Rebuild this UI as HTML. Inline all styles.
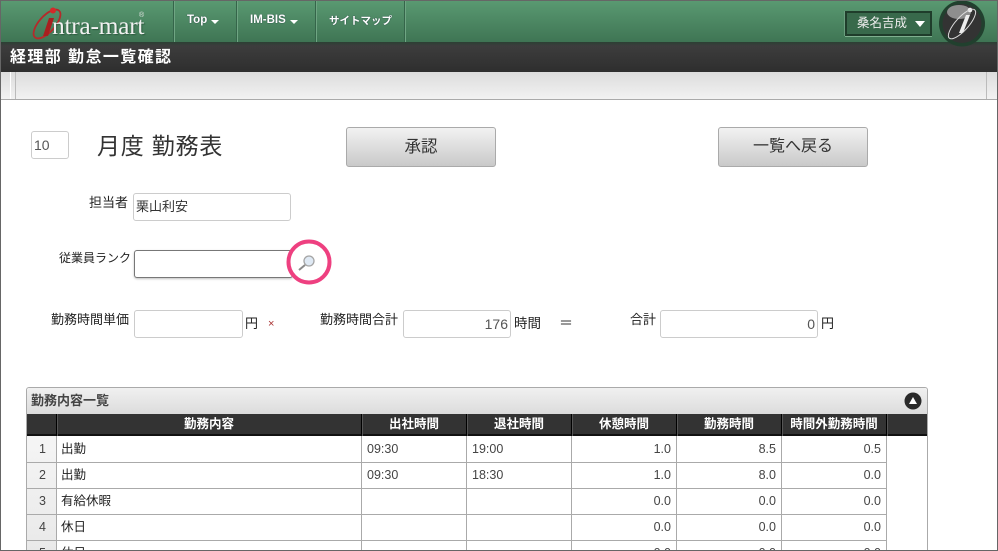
<!DOCTYPE html>
<html lang="ja"><head><meta charset="utf-8"><title>勤怠一覧確認</title>
<style>
html,body{margin:0;padding:0;background:#fff}
#w{width:998px;height:551px;position:relative;overflow:hidden;background:#fff;font-family:"Liberation Sans","Noto Sans CJK JP",sans-serif;font-size:12px;color:#333}
.a{position:absolute;white-space:nowrap}
.inp{position:absolute;box-sizing:border-box;background:#fff;border:1px solid #ccc;border-radius:3px;font-size:13px;line-height:26px;padding:0 2px;color:#555}
.btn{position:absolute;box-sizing:border-box;width:150px;height:40px;top:127px;border:1px solid #aaa;border-radius:3px;background:linear-gradient(#f2f2f2,#c9c9c9);text-align:center;font-size:16px;line-height:38px;color:#333}
.nav{position:absolute;top:1px;height:41px;width:1px;background:#6fa583;box-shadow:-1px 0 0 #35654a}
.navt{position:absolute;top:14px;color:#fff;font-weight:bold;font-size:11.500px;white-space:nowrap;text-shadow:0 0 1px #123}
.car{display:inline-block;border-left:4px solid transparent;border-right:4px solid transparent;border-top:4px solid #fff;margin-left:4px;vertical-align:-1px}
.lbl{position:absolute;white-space:nowrap;color:#222;font-size:13px;line-height:17px}
.th{position:absolute;top:414px;height:22px;line-height:21px;text-align:center;color:#fff;font-weight:bold;font-size:12.500px;white-space:nowrap}
.vl{position:absolute;width:1px;background:#aaa;top:436px;height:114px}
.hl{position:absolute;height:1px;background:#aaa;left:27px;width:859px}
.vh{position:absolute;width:1px;background:#000;top:414px;height:22px;box-shadow:1px 0 0 #555}
.c{position:absolute;white-space:nowrap;font-size:12.500px;color:#444;line-height:16px}
.r{text-align:right;width:60px}
</style></head><body><div id="w">

<!-- top bar -->
<div class="a" style="left:0;top:0;width:998px;height:42px;background:linear-gradient(#5a9a72,#3f7554)"></div>
<div class="a" style="left:0;top:42px;width:998px;height:30px;background:linear-gradient(#2c4034 0,#3d3d3d 4px,#2e2e2e 100%)"></div>
<div class="a" style="left:0;top:72px;width:998px;height:27px;background:linear-gradient(#dcdcdc,#f2f2f2)"></div>
<div class="a" style="left:0;top:99px;width:998px;height:1px;background:#aaa"></div>
<div class="a" style="left:10px;top:72px;width:1px;height:27px;background:#fff"></div>
<div class="a" style="left:15px;top:72px;width:1px;height:27px;background:#bbb"></div>
<div class="a" style="left:986px;top:72px;width:1px;height:27px;background:#bbb"></div>

<!-- logo -->
<svg class="a" style="left:30px;top:5px" width="40" height="36" viewBox="0 0 40 36">
<ellipse cx="17" cy="19" rx="8" ry="18" transform="rotate(42 17 19)" fill="none" stroke="#b52a2a" stroke-width="1.800"/>
<path d="M19 13 L24 13 L18 31 L13 31 Z" fill="#a81f1f"/>
<circle cx="23" cy="5.500" r="3" fill="#d42a2a"/>
</svg>
<div class="a" style="left:52px;top:11px;font-family:'Liberation Serif',serif;font-size:25.500px;color:#f1f1f1;letter-spacing:-.3px;line-height:30px;text-shadow:1px 1px 1px #2c5a3e">ntra-mart</div>
<div class="a" style="left:139px;top:12px;font-size:7px;color:#e5e5e5">®</div>

<div class="nav" style="left:174px"></div>
<div class="nav" style="left:237px"></div>
<div class="nav" style="left:316px"></div>
<div class="nav" style="left:405px"></div>
<div class="navt" style="left:187px">Top<span class="car"></span></div>
<div class="navt" style="left:250px">IM-BIS<span class="car"></span></div>
<div class="navt" style="left:329px;font-size:10.500px;top:13px">サイトマップ</div>

<!-- user -->
<div class="a" style="left:845px;top:11px;width:87px;height:25px;box-sizing:border-box;border:2px solid #1f3d2b;background:#38694b;box-shadow:0 1px 0 #7fb08f,-1px 0 0 #6a9e7e;color:#eee;font-size:12.500px;line-height:21px;padding-left:10px">桑名吉成</div>
<div class="a" style="left:915px;top:21px;border-left:5px solid transparent;border-right:5px solid transparent;border-top:6px solid #fff"></div>
<svg class="a" style="left:939px;top:0" width="48" height="47" viewBox="0 0 48 47">
<circle cx="23" cy="23.500" r="23" fill="#21402e"/>
<circle cx="23" cy="23.500" r="19.500" fill="#333"/>
<ellipse cx="20" cy="12" rx="12" ry="7" fill="#8e8e8e"/>
<circle cx="31" cy="10" r="2.300" fill="#eee"/>
<path d="M27 15 L31 15 L24 33 L20 33 Z" fill="#eee"/>
<ellipse cx="23" cy="24" rx="6.500" ry="19" transform="rotate(42 23 24)" fill="none" stroke="#ddd" stroke-width="1"/>
</svg>

<div class="a" style="left:10px;top:48px;color:#fff;font-size:16px;font-weight:bold;line-height:20px;letter-spacing:1.400px">経理部 勤怠一覧確認</div>

<!-- form -->
<div class="inp" style="left:31px;top:131px;width:38px;height:28px;font-size:14px">10</div>
<div class="a" style="left:97px;top:131px;font-size:23px;line-height:30px;color:#333;letter-spacing:.8px">月度 勤務表</div>
<div class="btn" style="left:346px;font-size:16.500px">承認</div>
<div class="btn" style="left:718px">一覧へ戻る</div>

<div class="lbl" style="left:89px;top:194px">担当者</div>
<div class="inp" style="left:133px;top:193px;width:158px;height:28px;color:#333">栗山利安</div>

<div class="lbl" style="left:59px;top:250px;font-size:12px">従業員ランク</div>
<div class="inp" style="left:134px;top:250px;width:159px;height:28px;border-color:#777;box-shadow:0 1px 2px rgba(0,0,0,.25)"></div>
<svg class="a" style="left:286px;top:239px" width="46" height="46" viewBox="0 0 46 46">
<circle cx="23" cy="23" r="20.500" fill="#fff" stroke="#ee4080" stroke-width="4"/>
<circle cx="23" cy="22" r="5" fill="#dfe9f4" stroke="#a5a5a5" stroke-width="1.300"/>
<path d="M19 26 L13 31" stroke="#8a8a8a" stroke-width="2"/>
</svg>

<div class="lbl" style="left:51px;top:311px">勤務時間単価</div>
<div class="inp" style="left:134px;top:310px;width:109px;height:28px"></div>
<div class="lbl" style="left:245px;top:315px">円</div>
<div class="a" style="left:268px;top:317px;font-size:11px;color:#a33;line-height:14px">×</div>
<div class="lbl" style="left:320px;top:311px">勤務時間合計</div>
<div class="inp" style="left:403px;top:310px;width:108px;height:28px;text-align:right;padding-right:2px;font-size:14px">176</div>
<div class="lbl" style="left:514px;top:315px;font-size:13.500px">時間</div>
<div class="a" style="left:559px;top:313px;font-size:14px;color:#333;line-height:20px">＝</div>
<div class="lbl" style="left:630px;top:311px">合計</div>
<div class="inp" style="left:660px;top:310px;width:158px;height:28px;text-align:right;padding-right:2px;font-size:14px">0</div>
<div class="lbl" style="left:821px;top:315px">円</div>

<!-- panel -->
<div class="a" style="left:26px;top:387px;width:902px;height:170px;box-sizing:border-box;border:1px solid #aaa;border-radius:3px 3px 0 0;background:#fff"></div>
<div class="a" style="left:27px;top:388px;width:900px;height:26px;background:linear-gradient(#f0f0f0,#dcdcdc);border-radius:3px 3px 0 0"></div>
<div class="a" style="left:31px;top:392px;font-size:13px;font-weight:bold;color:#444;line-height:17px">勤務内容一覧</div>
<svg class="a" style="left:904px;top:392px" width="18" height="18" viewBox="0 0 18 18"><circle cx="9" cy="9" r="8.500" fill="#2a2a2a"/><path d="M9 5 L13 12 L5 12 Z" fill="#fff"/></svg>

<div class="a" style="left:27px;top:414px;width:900px;height:22px;box-sizing:border-box;background:#333;border-bottom:2px solid #111"></div>
<div class="vh" style="left:56px"></div><div class="vh" style="left:361px"></div><div class="vh" style="left:466px"></div><div class="vh" style="left:571px"></div><div class="vh" style="left:676px"></div><div class="vh" style="left:781px"></div><div class="vh" style="left:886px"></div>
<div class="th" style="left:57px;width:304px">勤務内容</div>
<div class="th" style="left:362px;width:104px">出社時間</div>
<div class="th" style="left:467px;width:104px">退社時間</div>
<div class="th" style="left:572px;width:104px">休憩時間</div>
<div class="th" style="left:677px;width:104px">勤務時間</div>
<div class="th" style="left:782px;width:104px">時間外勤務時間</div>

<div class="a" style="left:27px;top:436px;width:29px;height:114px;background:linear-gradient(#f5f5f5,#e9e9e9)"></div>
<div class="hl" style="top:462px"></div><div class="hl" style="top:488px"></div><div class="hl" style="top:514px"></div><div class="hl" style="top:540px"></div>
<div class="vl" style="left:56px"></div><div class="vl" style="left:361px"></div><div class="vl" style="left:466px"></div><div class="vl" style="left:571px"></div><div class="vl" style="left:676px"></div><div class="vl" style="left:781px"></div><div class="vl" style="left:886px"></div>

<div class="c" style="left:39px;top:441px">1</div><div class="c" style="left:61px;top:441px;color:#222">出勤</div><div class="c" style="left:367px;top:441px">09:30</div><div class="c" style="left:472px;top:441px">19:00</div><div class="c r" style="left:611px;top:441px">1.0</div><div class="c r" style="left:716px;top:441px">8.5</div><div class="c r" style="left:821px;top:441px">0.5</div>
<div class="c" style="left:39px;top:467px">2</div><div class="c" style="left:61px;top:467px;color:#222">出勤</div><div class="c" style="left:367px;top:467px">09:30</div><div class="c" style="left:472px;top:467px">18:30</div><div class="c r" style="left:611px;top:467px">1.0</div><div class="c r" style="left:716px;top:467px">8.0</div><div class="c r" style="left:821px;top:467px">0.0</div>
<div class="c" style="left:39px;top:493px">3</div><div class="c" style="left:61px;top:493px;color:#222">有給休暇</div><div class="c r" style="left:611px;top:493px">0.0</div><div class="c r" style="left:716px;top:493px">0.0</div><div class="c r" style="left:821px;top:493px">0.0</div>
<div class="c" style="left:39px;top:519px">4</div><div class="c" style="left:61px;top:519px;color:#222">休日</div><div class="c r" style="left:611px;top:519px">0.0</div><div class="c r" style="left:716px;top:519px">0.0</div><div class="c r" style="left:821px;top:519px">0.0</div>
<div class="c" style="left:39px;top:545px">5</div><div class="c" style="left:61px;top:545px;color:#222">休日</div><div class="c r" style="left:611px;top:545px">0.0</div><div class="c r" style="left:716px;top:545px">0.0</div><div class="c r" style="left:821px;top:545px">0.0</div>

<!-- outer frame -->
<div class="a" style="left:0;top:0;width:998px;height:551px;box-sizing:border-box;border:1px solid #666;pointer-events:none"></div>
</div></body></html>
